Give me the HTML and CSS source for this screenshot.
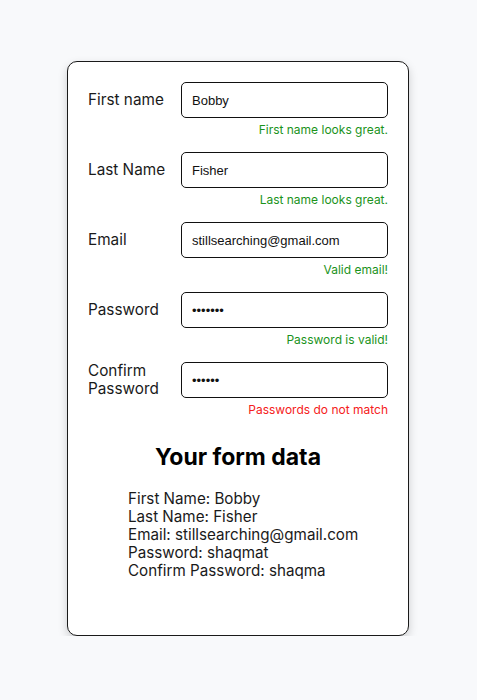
FILE: index.html
```html
<!DOCTYPE html>
<html>
<head>
<meta charset="utf-8">
<link rel="stylesheet" href="styles.css">
</head>
<body>
<div class="card">
  <form class="form">
    <div class="field">
      <div class="row">
        <label class="label">First name</label>
        <input class="input" type="text" value="Bobby">
      </div>
      <div class="msg ok">First name looks great.</div>
    </div>
    <div class="field">
      <div class="row">
        <label class="label">Last Name</label>
        <input class="input" type="text" value="Fisher">
      </div>
      <div class="msg ok">Last name looks great.</div>
    </div>
    <div class="field">
      <div class="row">
        <label class="label">Email</label>
        <input class="input" type="text" value="stillsearching@gmail.com">
      </div>
      <div class="msg ok">Valid email!</div>
    </div>
    <div class="field">
      <div class="row">
        <label class="label">Password</label>
        <input class="input" type="password" value="shaqmat">
      </div>
      <div class="msg ok">Password is valid!</div>
    </div>
    <div class="field">
      <div class="row">
        <label class="label">Confirm Password</label>
        <input class="input" type="password" value="shaqma">
      </div>
      <div class="msg bad">Passwords do not match</div>
    </div>
  </form>
  <h2 class="title">Your form data</h2>
  <div class="data">
    <div>First Name: Bobby</div>
    <div>Last Name: Fisher</div>
    <div>Email: stillsearching@gmail.com</div>
    <div>Password: shaqmat</div>
    <div>Confirm Password: shaqma</div>
  </div>
</div>
</body>
</html>
```
FILE: styles.css
```css
html, body {
  margin: 0;
  padding: 0;
}
body {
  background: #f8f9fb;
  font-family: Inter, "Noto Sans", sans-serif;
  color: #1a1a1a;
  padding-top: 61px;
}
.card {
  width: 300px;
  margin: 0 0 0 67px;
  background: #fff;
  border: 1px solid #1a1a1a;
  border-radius: 10px;
  box-shadow: 0 4px 10px rgba(0, 0, 0, 0.18);
  padding: 20px 20px 55px 20px;
}
.form {
  display: flex;
  flex-direction: column;
  gap: 14px;
}
.row {
  display: flex;
  align-items: center;
}
.label {
  width: 93px;
  flex: none;
  font-size: 15.3px;
  line-height: 18px;
}
.input {
  flex: 1;
  min-width: 0;
  box-sizing: border-box;
  height: 36px;
  margin: 0;
  border: 1px solid #111;
  border-radius: 5px;
  padding: 0 10px;
  font-family: "Liberation Sans", Arial, sans-serif;
  font-size: 13px;
  color: #111;
  background: #fff;
  outline: none;
}
.msg {
  text-align: right;
  font-size: 12px;
  line-height: 16px;
  margin-top: 4px;
}
.ok {
  color: #1b931b;
}
.bad {
  color: #f52020;
}
.title {
  text-align: center;
  font-size: 23px;
  font-weight: 700;
  line-height: 30px;
  margin: 24px 0 18px 0;
  color: #000;
}
.data {
  padding-left: 40px;
  font-size: 15.2px;
  line-height: 18px;
}
```
